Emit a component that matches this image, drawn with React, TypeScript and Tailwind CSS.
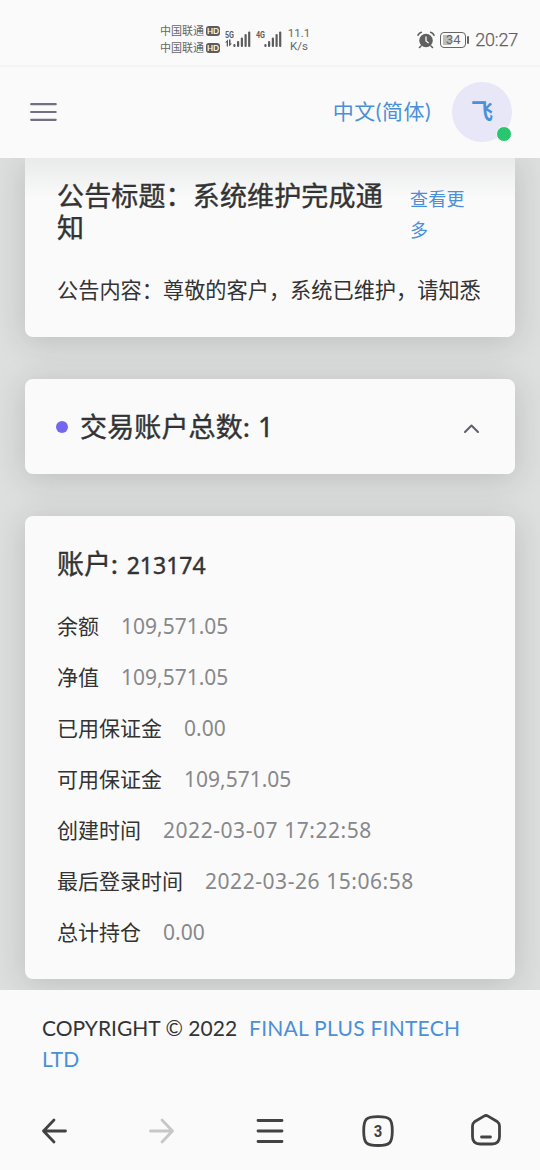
import type { ReactNode } from 'react'

const accountRows = [
  { label: '余额', value: '109,571.05' },
  { label: '净值', value: '109,571.05' },
  { label: '已用保证金', value: '0.00' },
  { label: '可用保证金', value: '109,571.05' },
  { label: '创建时间', value: '2022-03-07 17:22:58', date: true },
  { label: '最后登录时间', value: '2022-03-26 15:06:58', date: true },
  { label: '总计持仓', value: '0.00' },
]

function Carrier() {
  return (
    <div className="flex items-center gap-[2px] h-4">
      <span className="text-[11px] leading-4">中国联通</span>
      <span className="w-[14px] h-[10px] rounded-[3px] bg-[#5c5c5c] text-[#fafafa] text-[8px] leading-[10px] font-bold text-center">
        HD
      </span>
    </div>
  )
}

function Signal({ label, data }: { label: string; data?: boolean }) {
  return (
    <svg width="27" height="18" viewBox="0 0 27 18" fill="#5c5c5c">
      <text x="0" y="7.5" fontSize="9" fontWeight="700" fontFamily="Roboto, sans-serif" textLength="9" lengthAdjust="spacingAndGlyphs">
        {label}
      </text>
      {data && <path d="M1.7 16.5v-4H0l3-3v7zM4 9.5h1.500v4H7l-3 3z" />}
      <rect x="8.3" y="14" width="2.2" height="3" rx="1" />
      <rect x="12" y="11" width="2.2" height="6" rx="1" />
      <rect x="15.8" y="7.5" width="2.2" height="9.5" rx="1" />
      <rect x="19.5" y="4" width="2.2" height="13" rx="1" />
      <rect x="23.1" y="1.5" width="2.2" height="15.5" rx="1" />
    </svg>
  )
}

function StatusBar() {
  return (
    <div className="h-[65px] shrink-0 pt-[14px] pl-[160px] pr-[22px] flex items-center text-[#666]">
      <div className="flex flex-col gap-px w-[65px]">
        <Carrier />
        <Carrier />
      </div>
      <div className="flex gap-[4px] -mt-px">
        <Signal label="5G" data />
        <Signal label="4G" />
      </div>
      <div className="ml-[3px] w-[26px] text-[11.5px] leading-[13px] text-center font-['Roboto',sans-serif]">
        <p>11.1</p>
        <p>K/s</p>
      </div>
      <div className="flex items-center ml-auto">
        <svg width="18" height="18" viewBox="0 0 18 18" fill="none" stroke="#606060" strokeLinecap="round">
          <circle cx="9" cy="9.5" r="6.8" fill="#606060" stroke="none" />
          <path d="M1 4.2Q2 2 4.3 1.3M13.7 1.3Q16 2 17 4.2M4 15l-1.5 1.5M14 15l1.5 1.5" strokeWidth="1.6" />
          <path d="M9 6v4l2.3 1.7" stroke="#fafafa" strokeWidth="1.3" />
        </svg>
        <div className="ml-[5px] w-[26px] h-4 rounded-[4px] border-[1.5px] border-[#666] p-[2px]">
          <div className="h-full w-full bg-[linear-gradient(90deg,#bdbdbd_38%,transparent_38%)] flex items-center justify-center text-[13px] leading-none font-['Roboto',sans-serif]">
            34
          </div>
        </div>
        <span className="ml-[1px] w-[2px] h-2 rounded bg-[#666]" />
        <span className="mt-px ml-[6px] text-[18px] leading-5 tracking-[-0.2px] font-['Roboto',sans-serif] font-light [-webkit-text-stroke:0.25px_#555]">
          20:27
        </span>
      </div>
    </div>
  )
}

function Header() {
  return (
    <header className="h-[93px] shrink-0 border-t-2 border-[#f4f4f5] pb-px pl-[30px] pr-[28px] flex items-center justify-between">
      <svg width="27" height="20" viewBox="0 0 27 20" stroke="#716f80" strokeWidth="2.2" strokeLinecap="round">
        <path d="M1.2 2.2h24.5M1.2 10h24.5M1.2 17.8h24.5" />
      </svg>
      <div className="flex items-center gap-[21px]">
        <span className="-mt-[3px] text-[21px] leading-8 tracking-[0.5px] text-[#4a90d9]">中文(简体)</span>
        <div className="relative w-[60px] h-[60px] rounded-full bg-[#e8e7f8] flex items-center justify-center">
          <span className="-mt-[2px] text-[22px] leading-8 font-bold text-[#4a90d9]">飞</span>
          <span className="absolute right-0 bottom-0 w-4 h-4 rounded-full bg-[#28c76f] border border-[#f4f4fb]" />
        </div>
      </div>
    </header>
  )
}

function Card({ className, children }: { className: string; children: ReactNode }) {
  return (
    <section className={`bg-[#fafafa] shadow-[0_4px_32px_rgba(40,45,45,0.18)] ${className}`}>
      {children}
    </section>
  )
}

function BottomNav() {
  return (
    <nav className="h-[80px] shrink-0 pt-[2px] grid grid-cols-5 items-center justify-items-center text-[#424242]">
      <svg width="32" height="32" viewBox="0 0 32 32" fill="none" stroke="currentColor" strokeWidth="2.8" strokeLinecap="round" strokeLinejoin="round">
        <path d="M27.5 16H5.5M16 5L5.5 16 16 27" />
      </svg>
      <svg width="32" height="32" viewBox="0 0 32 32" fill="none" stroke="#c7c7c7" strokeWidth="2.8" strokeLinecap="round" strokeLinejoin="round">
        <path d="M4.5 16h22M16 5l10.5 11L16 27" />
      </svg>
      <svg width="32" height="32" viewBox="0 0 32 32" fill="none" stroke="currentColor" strokeWidth="2.8" strokeLinecap="round">
        <path d="M4 5.5h24M4 16h24M4 26.5h24" />
      </svg>
      <svg width="34" height="34" viewBox="0 0 34 34" fill="none" stroke="currentColor" strokeWidth="2.8">
        <path d="M17 2.7C29 2.7 31.3 5 31.3 17S29 31.5 17 31.5 2.7 29 2.7 17 5 2.7 17 2.7Z" />
        <text x="17" y="23.2" fontSize="17" fontWeight="700" textAnchor="middle" fill="currentColor" stroke="none" fontFamily="Roboto, sans-serif" textLength="8.5" lengthAdjust="spacingAndGlyphs">
          3
        </text>
      </svg>
      <svg width="34" height="34" viewBox="0 0 34 34" fill="none" stroke="currentColor" strokeWidth="2.8" strokeLinecap="round" strokeLinejoin="round">
        <path d="M15 2.1q2-1.2 4 0L28.5 7.8Q30.5 9.2 30.5 12V22.5q0 7.5-7.5 7.5H11Q3.5 30 3.5 22.5V12Q3.5 9.200 5.5 7.8ZM12.5 23h9" />
      </svg>
    </nav>
  )
}

export default function App() {
  return (
    <div className="w-[540px] h-[1170px] overflow-hidden flex flex-col bg-[#fafafa] text-[#333] font-['Lato','Noto_Sans_CJK_SC',sans-serif]">
      <StatusBar />
      <Header />

      <main className="h-[832px] shrink-0 overflow-hidden bg-[#dddede] px-[25px] flex flex-col gap-[42px]">
        <Card className="h-[179px] shrink-0 rounded-b-[8px] px-8 pt-[22px] bg-[linear-gradient(#e9eaea,#fafafa_40px)]">
          <div className="flex">
            <h2 className="w-[353px] pr-[20px] text-[27px] leading-8 tracking-[0.15px] [-webkit-text-stroke:0.4px_#333]">
              公告标题：系统维护完成通知
            </h2>
            <a href="#" className="w-[56px] pt-[4px] text-[18px] leading-[31px] tracking-[0.2px] text-[#4a90d9]">
              查看更多
            </a>
          </div>
          <p className="mt-[28px] text-[21.2px] leading-8 whitespace-nowrap">
            公告内容：尊敬的客户，系统已维护，请知悉
          </p>
        </Card>

        <Card className="h-[95px] shrink-0 rounded-[8px] pl-[31px] pr-[35px] flex items-center">
          <span className="w-3 h-3 rounded-full bg-[#7367f0]" />
          <h2 className="ml-3 text-[27px] leading-8 tracking-[0.15px] [-webkit-text-stroke:0.4px_#333]">
            交易账户总数: <span className="ml-px font-['Noto_Sans',sans-serif]">1</span>
          </h2>
          <svg className="ml-auto mt-[3px]" width="17" height="11" viewBox="0 0 17 11" fill="none" stroke="#625f70" strokeWidth="2.1" strokeLinecap="round" strokeLinejoin="round">
            <path d="M2 9l6.5-6.5L15 9" />
          </svg>
        </Card>

        <Card className="h-[463px] shrink-0 rounded-[8px] px-8 pt-8">
          <h2 className="h-8 text-[27px] leading-8 whitespace-nowrap [-webkit-text-stroke:0.4px_#333]">
            账户: <span className="ml-[2px] text-[23px] font-['Noto_Sans',sans-serif]">213174</span>
          </h2>
          <dl className="mt-[30px] flex flex-col gap-[19px] text-[21px] leading-8">
            {accountRows.map((row) => (
              <div key={row.label} className="flex gap-[22px]">
                <dt>{row.label}</dt>
                <dd className={`text-[#87888a] font-['Noto_Sans',sans-serif] ${row.date ? 'tracking-[0.55px]' : ''}`}>
                  {row.value}
                </dd>
              </div>
            ))}
          </dl>
        </Card>
      </main>

      <footer className="h-[100px] shrink-0 px-[42px] pt-[22px] text-[21px] leading-[31px]">
        <div className="flex gap-3">
          <span>COPYRIGHT © 2022</span>
          <a href="#" className="text-[#4a90d9] tracking-[0.25px]">FINAL PLUS FINTECH</a>
        </div>
        <a href="#" className="block text-[#4a90d9]">LTD</a>
      </footer>
      <BottomNav />
    </div>
  )
}
